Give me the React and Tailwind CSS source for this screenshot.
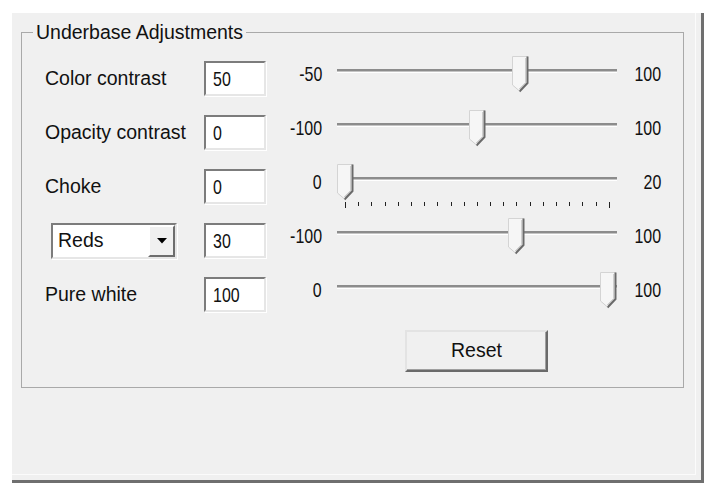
import { useState } from 'react';

// digits in the dialog are a tall narrow face; squeeze Liberation Sans to get it
const Num = ({ children, right }) => (
    <span className={`inline-block text-[21px] scale-x-[0.76] ${right ? 'origin-right' : 'origin-left'}`}>{children}</span>
);

const rows = [
    { label: 'Color contrast', value: 50, min: -50, max: 100 },
    { label: 'Opacity contrast', value: 0, min: -100, max: 100 },
    { label: 'Choke', value: 0, min: 0, max: 20, ticks: true },
    { label: 'Reds', value: 30, min: -100, max: 100, select: true },
    { label: 'Pure white', value: 100, min: 0, max: 100 },
];

const Thumb = () => (
    <svg width="17" height="37" viewBox="0 0 17 37" className="block">
        <polygon points="0.5,0.5 16,0.5 16,27 8,35.5 0.5,29" fill="#f6f6f6" />
        <polyline points="0.5,29 0.5,0.5 16,0.5" fill="none" stroke="#d4d4d4" strokeWidth="1" />
        <polyline points="15.5,0.5 15.5,27 7.5,35.5" fill="none" stroke="#6a6a6a" strokeWidth="2" />
        <polyline points="14,2 14,26.5 7.5,33" fill="none" stroke="#a8a8a8" strokeWidth="1" />
        <line x1="0.5" y1="29" x2="7.5" y2="35" stroke="#cfcfcf" strokeWidth="1" />
    </svg>
);

const Slider = ({ value, min, max, ticks }) => {
    const left = ((value - min) / (max - min)) * 263;
    const count = max - min;
    return (
        <div className="relative w-[280px] h-[35px] shrink-0">
            <div className="absolute left-0 right-0 top-[8px] h-[4px] bg-[#c4c4c4] border-t-2 border-[#8c8c8c] border-b border-b-white" />
            <div className="absolute top-[-5px]" style={{ left }}>
                <Thumb />
            </div>
            {ticks && (
                <div className="absolute top-[33px] left-[8px] w-[265px] flex justify-between items-start">
                    {Array.from({ length: count + 1 }).map((_, i) => (
                        <span
                            key={i}
                            className={`block w-px bg-[#222] ${i === 0 || i === count ? 'h-[6px]' : 'h-[4px]'}`}
                        />
                    ))}
                </div>
            )}
        </div>
    );
};

const sunken = 'border-2 border-t-[#7c7c7c] border-l-[#7c7c7c] border-b-[#e6e6e6] border-r-[#e6e6e6] shadow-[1px_1px_0_#ffffff] bg-white';

const ValueBox = ({ value }) => (
    <div className={`w-[62px] h-[35px] pl-[7px] flex items-center shrink-0 ${sunken}`}>
        <Num>{value}</Num>
    </div>
);

const Dropdown = ({ value }) => (
    <div className={`ml-[6px] w-[126px] h-[36px] flex items-stretch ${sunken}`}>
        <span className="flex-1 pl-[5px] flex items-center">{value}</span>
        <div className="w-[27px] flex items-center justify-center bg-[#f0f0f0] border-2 border-t-white border-l-white border-b-[#6d6d6d] border-r-[#6d6d6d]">
            <svg width="10" height="6" viewBox="0 0 10 6">
                <polygon points="0,0 10,0 5,5.5" fill="#000" />
            </svg>
        </div>
    </div>
);

const App = () => {
    const [items] = useState(rows);

    return (
        <div className="min-h-[500px] bg-white pt-[13px] pl-[12px] font-['Liberation_Sans',Arial,sans-serif] text-[19.5px] text-[#111]">
            <div className="w-[692px] h-[470px] bg-[#f0f0f0] border-r-[3px] border-b-[3px] border-[#6f6f6f]">
                <div className="w-[684px] h-[462px] pt-[8px] border-r border-b border-[#fbfbfb]">
                    <fieldset className="ml-[9px] w-[663px] h-[367px] border border-[#a9a9a9]">
                        <legend className="ml-[11px] px-[3px] leading-[22px]">Underbase Adjustments</legend>

                        <div className="pt-[18px] pl-[23px] flex flex-col gap-[19px]">
                            {items.map((row) => (
                                <div key={row.label} className="flex items-center h-[35px]">
                                    <div className="w-[159px] shrink-0">
                                        {row.select ? <Dropdown value={row.label} /> : <span>{row.label}</span>}
                                    </div>
                                    <ValueBox value={row.value} />
                                    <span className="w-[56px] self-start mt-[1px] leading-[24px] text-right">
                                        <Num right>{row.min}</Num>
                                    </span>
                                    <div className="ml-[15px]">
                                        <Slider value={row.value} min={row.min} max={row.max} ticks={row.ticks} />
                                    </div>
                                    <span className="w-[44px] self-start mt-[1px] leading-[24px] text-right">
                                        <Num right>{row.max}</Num>
                                    </span>
                                </div>
                            ))}
                        </div>

                        <div className="pl-[383px] pt-[18px]">
                            <button className="w-[143px] h-[42px] bg-[#f0f0f0] border-2 border-t-[#e3e3e3] border-l-[#e3e3e3] border-b-[#6a6a6a] border-r-[#6a6a6a] shadow-[inset_-1px_-1px_0_#a0a0a0]">
                                Reset
                            </button>
                        </div>
                    </fieldset>
                </div>
            </div>
        </div>
    );
};

export default App;
